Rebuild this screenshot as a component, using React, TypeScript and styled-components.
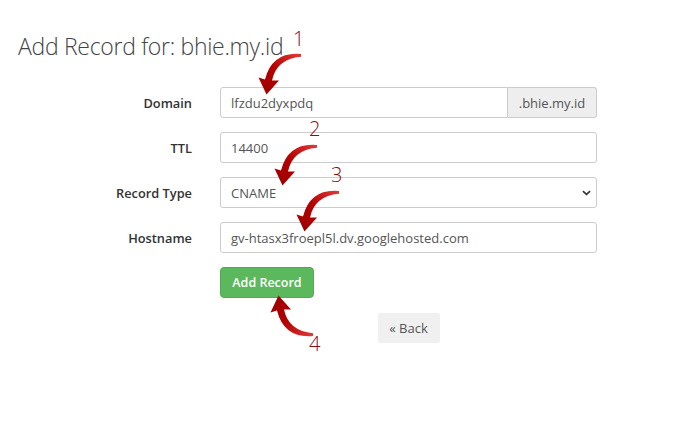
import React from "react"
import styled, { createGlobalStyle } from "styled-components"

const GlobalStyle = createGlobalStyle`
  html, body {
    margin: 0;
    padding: 0;
    background: #ffffff;
  }
  body {
    font-family: "Open Sans", "Liberation Sans", sans-serif;
  }
`

const rows = [
  { label: "Domain", value: "lfzdu2dyxpdq", addon: ".bhie.my.id" },
  { label: "TTL", value: "14400" },
]

const notes = [
  { n: "1", numLeft: 293, numTop: 27, left: 258, top: 51, flip: false },
  { n: "2", numLeft: 309, numTop: 117, left: 274, top: 142, flip: false },
  { n: "3", numLeft: 331, numTop: 163, left: 296, top: 188, flip: false },
  { n: "4", numLeft: 309, numTop: 332, left: 270, top: 295, flip: true },
]

export default function App() {
  return (
    <>
      <GlobalStyle />
      <Page>
        <Title>Add Record for: bhie.my.id</Title>
        <Form onSubmit={(e) => e.preventDefault()}>
          {rows.map((r) => (
            <React.Fragment key={r.label}>
              <Label>{r.label}</Label>
              <InputGroup>
                <Input defaultValue={r.value} $joined={!!r.addon} />
                {r.addon && <Addon>{r.addon}</Addon>}
              </InputGroup>
            </React.Fragment>
          ))}
          <Label>Record Type</Label>
          <SelectWrap>
            <Select defaultValue="CNAME">
              <option>A</option>
              <option>AAAA</option>
              <option>CNAME</option>
              <option>MX</option>
              <option>TXT</option>
            </Select>
            <Chevron viewBox="0 0 10 6">
              <path d="M1 1 L5 4.6 L9 1" />
            </Chevron>
          </SelectWrap>
          <Label>Hostname</Label>
          <Input defaultValue="gv-htasx3froepl5l.dv.googlehosted.com" />
          <span />
          <Actions>
            <SubmitButton type="submit">Add Record</SubmitButton>
            <BackButton type="button">« Back</BackButton>
          </Actions>
        </Form>
        {notes.map((a) => (
          <React.Fragment key={a.n}>
            <Number style={{ left: a.numLeft, top: a.numTop }}>{a.n}</Number>
            <ArrowSvg
              viewBox="0 0 44 44"
              $flip={a.flip}
              style={{ left: a.left, top: a.top }}
            >
              <defs>
                <linearGradient id={`g${a.n}`} x1="1" y1="0" x2="0" y2="1">
                  <stop offset="0" stopColor="#e23a3a" />
                  <stop offset="0.5" stopColor="#b30000" />
                  <stop offset="1" stopColor="#9a0000" />
                </linearGradient>
              </defs>
              <path
                d="M43 3 Q14 0.5 7 28.5 L0.5 26.5 L8.5 43.5 L21 29.5 L14 29.5 Q18.5 8 43 5.8 Z"
                fill={`url(#g${a.n})`}
              />
            </ArrowSvg>
          </React.Fragment>
        ))}
      </Page>
    </>
  )
}

const Page = styled.div`
  position: relative;
  width: 700px;
  height: 433px;
  overflow: hidden;
  background: #ffffff;
`

const Title = styled.h1`
  margin: 0;
  padding: 33px 0 0 18px;
  font-family: "Open Sans", "Liberation Sans", sans-serif;
  font-weight: 300;
  font-size: 23px;
  line-height: 26px;
  color: #444444;
  letter-spacing: -0.3px;
`

const Form = styled.form`
  display: grid;
  grid-template-columns: 192px 377px;
  grid-template-rows: repeat(4, 31px) auto;
  column-gap: 28px;
  row-gap: 14px;
  margin-top: 28px;
`

const Label = styled.label`
  display: flex;
  align-items: center;
  justify-content: flex-end;
  font-size: 12.8px;
  font-weight: 600;
  color: #333333;
`

const InputGroup = styled.div`
  display: flex;
`

const Input = styled.input<{ $joined?: boolean }>`
  flex: 1;
  min-width: 0;
  box-sizing: border-box;
  height: 31px;
  padding: 0 10px;
  border: 1px solid #cccccc;
  border-radius: ${(p) => (p.$joined ? "3px 0 0 3px" : "3px")};
  font-family: "Open Sans", "Liberation Sans", sans-serif;
  font-size: 13px;
  color: #555555;
  background: #ffffff;
  outline: none;
`

const Addon = styled.span`
  width: 89px;
  box-sizing: border-box;
  display: flex;
  align-items: center;
  justify-content: center;
  border: 1px solid #cccccc;
  border-left: none;
  border-radius: 0 3px 3px 0;
  background: #eeeeee;
  font-size: 13px;
  color: #555555;
`

const SelectWrap = styled.div`
  position: relative;
  display: flex;
`

const Select = styled.select`
  flex: 1;
  appearance: none;
  box-sizing: border-box;
  height: 31px;
  padding: 0 10px;
  border: 1px solid #cccccc;
  border-radius: 3px;
  background: #ffffff;
  font-family: "Open Sans", "Liberation Sans", sans-serif;
  font-size: 13px;
  color: #555555;
  outline: none;
`

const Chevron = styled.svg`
  position: absolute;
  right: 6px;
  top: 13px;
  width: 9px;
  height: 6px;
  fill: none;
  stroke: #333333;
  stroke-width: 1.8;
  pointer-events: none;
`

const Actions = styled.div`
  display: flex;
  flex-direction: column;
  align-items: flex-start;
  gap: 15px;
`

const SubmitButton = styled.button`
  width: 94px;
  height: 31px;
  border: 1px solid #4cae4c;
  border-radius: 4px;
  background: #5cb85c;
  color: #ffffff;
  font-family: "Open Sans", "Liberation Sans", sans-serif;
  font-size: 12.5px;
  font-weight: 600;
  cursor: pointer;
`

const BackButton = styled.button`
  align-self: center;
  width: 62px;
  height: 30px;
  border: none;
  border-radius: 2px;
  background: #f0f0f0;
  color: #555555;
  font-family: "Open Sans", "Liberation Sans", sans-serif;
  font-size: 13px;
  cursor: pointer;
`

const Number = styled.span`
  position: absolute;
  font-family: "Open Sans", "Liberation Sans", sans-serif;
  font-weight: 300;
  font-size: 20px;
  line-height: 24px;
  color: #8a0c0c;
`

const ArrowSvg = styled.svg<{ $flip: boolean }>`
  position: absolute;
  width: 44px;
  height: 44px;
  transform: ${(p) => (p.$flip ? "scaleY(-1)" : "none")};
`
